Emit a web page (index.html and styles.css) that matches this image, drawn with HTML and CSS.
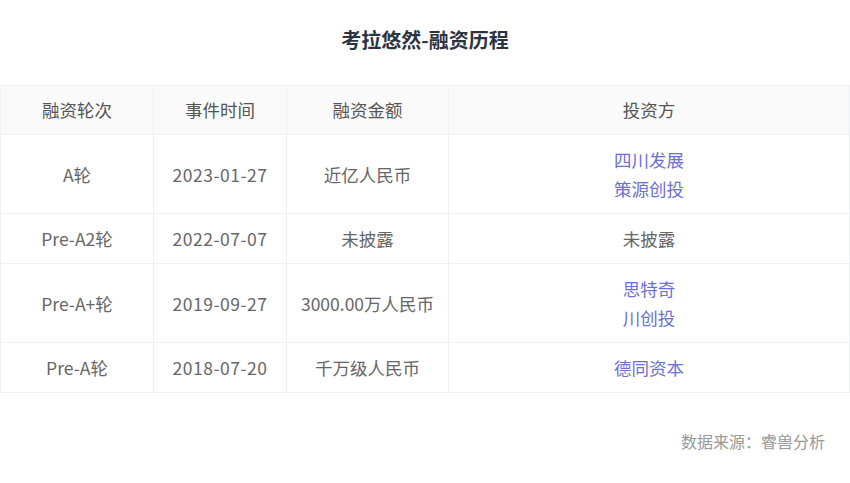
FILE: index.html
```html
<!DOCTYPE html>
<html lang="zh">
<head>
<meta charset="utf-8">
<link rel="stylesheet" href="styles.css">
</head>
<body>
<div class="page">
  <h1 class="title">考拉悠然-融资历程</h1>
  <table class="fin">
    <colgroup>
      <col class="c1"><col class="c2"><col class="c3"><col class="c4">
    </colgroup>
    <thead>
      <tr><th>融资轮次</th><th>事件时间</th><th>融资金额</th><th>投资方</th></tr>
    </thead>
    <tbody>
      <tr><td>A轮</td><td class="num">2023-01-27</td><td>近亿人民币</td><td><span class="link">四川发展</span><span class="link">策源创投</span></td></tr>
      <tr><td>Pre-A2轮</td><td class="num">2022-07-07</td><td>未披露</td><td>未披露</td></tr>
      <tr><td>Pre-A+轮</td><td class="num">2019-09-27</td><td>3000.00万人民币</td><td><span class="link">思特奇</span><span class="link">川创投</span></td></tr>
      <tr><td>Pre-A轮</td><td class="num">2018-07-20</td><td>千万级人民币</td><td><span class="link">德同资本</span></td></tr>
    </tbody>
  </table>
  <div class="source">数据来源：睿兽分析</div>
</div>
</body>
</html>
```
FILE: styles.css
```css
html, body {
  margin: 0;
  padding: 0;
  background: #fff;
}
.page {
  font-family: "Noto Sans CJK SC", "Noto Sans", sans-serif;
  width: 850px;
}
.title {
  margin: 0;
  height: 85px;
  box-sizing: border-box;
  padding-top: 26px;
  font-size: 20px;
  line-height: 28px;
  font-weight: 700;
  color: #2c3441;
  text-align: center;
}
.fin {
  width: 849px;
  border-collapse: collapse;
  table-layout: fixed;
  font-size: 17.5px;
  color: #666;
}
.c1 { width: 153px; }
.c2 { width: 133px; }
.c3 { width: 162px; }
.c4 { width: 401px; }
.fin th, .fin td {
  border: 1px solid #eef0f4;
  padding: 10px 0;
  line-height: 29px;
  text-align: center;
  font-weight: 400;
}
.fin th {
  line-height: 28px;
  background: #fafafa;
  color: #555;
}
.num {
  letter-spacing: 0.5px;
}
.link {
  display: block;
  color: #6b6fd6;
}
.source {
  margin-top: 36px;
  padding-right: 25px;
  text-align: right;
  font-size: 16px;
  line-height: 24px;
  color: #999;
}
```
